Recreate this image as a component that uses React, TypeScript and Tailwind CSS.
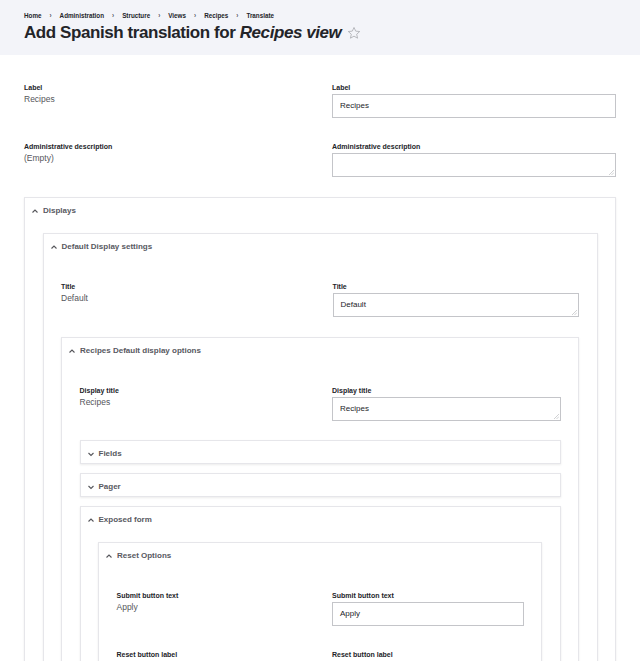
import { ReactNode } from "react";

const font = { fontFamily: '"Liberation Sans", Arial, sans-serif' };

const Chevron = ({ open }: { open: boolean }) => (
  <svg width="8" height="8" viewBox="0 0 8 8" className="shrink-0">
    <path
      d={open ? "M1.5 5.5 L4 3 L6.5 5.5" : "M1.5 3 L4 5.5 L6.5 3"}
      fill="none"
      stroke="#55565b"
      strokeWidth="1.1"
    />
  </svg>
);

const Details = ({
  title,
  open = true,
  className = "",
  children,
}: {
  title: string;
  open?: boolean;
  className?: string;
  children?: ReactNode;
}) => (
  <div
    className={`border border-[#e6e6ea] bg-white shadow-[0_1px_2px_rgba(0,0,0,0.08)] ${className}`}
  >
    <div className="flex h-[22px] items-center gap-[4px] pt-[4px] pl-[6px] text-[8px] font-bold text-[#58595f]">
      <Chevron open={open} />
      <span>{title}</span>
    </div>
    {open && <div className="px-[17.5px] pt-[13px] pb-[20px]">{children}</div>}
  </div>
);

const Row = ({
  label,
  value,
  inputValue,
  leftClass,
  resize = false,
  className = "",
}: {
  label: string;
  value: string;
  inputValue: string;
  leftClass: string;
  resize?: boolean;
  className?: string;
}) => (
  <div className={`flex ${className}`}>
    <div className={`shrink-0 ${leftClass}`}>
      <div className="text-[7px] leading-[9px] font-bold text-[#232429]">{label}</div>
      <div className="mt-[2px] text-[8.5px] leading-[10px] text-[#55565b]">{value}</div>
    </div>
    <div className="flex-1">
      <div className="text-[7px] leading-[9px] font-bold text-[#232429]">{label}</div>
      <div className="relative mt-[2px] flex h-[24px] items-center border border-[#c4c5c9] bg-white px-[7px] text-[8px] text-[#232429]">
        {inputValue}
        {resize && (
          <svg width="5" height="5" viewBox="0 0 5 5" className="absolute right-[1px] bottom-[1px]">
            <path d="M0 5 L5 0 M2.5 5 L5 2.5" stroke="#b0b1b5" strokeWidth="0.6" />
          </svg>
        )}
      </div>
    </div>
  </div>
);

export default function App() {
  const crumbs = ["Home", "Administration", "Structure", "Views", "Recipes", "Translate"];
  return (
    <div style={font} className="min-h-[661px] bg-white">
      <div className="h-[55px] bg-[#f3f4f9] px-[24px] pt-[12px]">
        <div className="flex items-center text-[6.3px] leading-[8px] font-bold text-[#232429]">
          {crumbs.map((c, i) => (
            <span key={c} className="flex items-center">
              {i > 0 && <span className="mx-[8px] text-[#545560]">›</span>}
              {c}
            </span>
          ))}
        </div>
        <h1 className="mt-[2px] flex items-center text-[17px] leading-[22px] font-bold tracking-[-0.025em] text-[#232429]">
          <span>
            Add Spanish translation for <em>Recipes view</em>
          </span>
          <svg width="14" height="14" viewBox="0 0 24 24" className="ml-[6px]">
            <path
              d="M12 2.5l2.9 6.3 6.9.7-5.2 4.6 1.5 6.8L12 17.4l-6.1 3.5 1.5-6.8-5.2-4.6 6.9-.7z"
              fill="none"
              stroke="#a5a6ac"
              strokeWidth="1.3"
              strokeLinejoin="round"
            />
          </svg>
        </h1>
      </div>

      <div className="px-[24px] pt-[28px]">
        <Row label="Label" value="Recipes" inputValue="Recipes" leftClass="w-[308px]" className="mb-[24px]" />
        <Row
          label="Administrative description"
          value="(Empty)"
          inputValue=""
          leftClass="w-[308px]"
          resize
          className="mb-[20px]"
        />

        <Details title="Displays" className="mb-[40px]">
          <Details title="Default Display settings">
            <Row
              label="Title"
              value="Default"
              inputValue="Default"
              leftClass="w-[271.5px]"
              resize
              className="mt-[13px] mb-[20px]"
            />
            <Details title="Recipes Default display options">
              <Row
                label="Display title"
                value="Recipes"
                inputValue="Recipes"
                leftClass="w-[252.5px]"
                resize
                className="mt-[13px] mb-[19px]"
              />
              <Details title="Fields" open={false} className="mb-[9px]" />
              <Details title="Pager" open={false} className="mb-[9px]" />
              <Details title="Exposed form">
                <Details title="Reset Options">
                  <Row
                    label="Submit button text"
                    value="Apply"
                    inputValue="Apply"
                    leftClass="w-[215.5px]"
                    className="mt-[13px] mb-[24px]"
                  />
                  <Row
                    label="Reset button label"
                    value="Reset"
                    inputValue="Reset"
                    leftClass="w-[215.5px]"
                  />
                </Details>
              </Details>
            </Details>
          </Details>
        </Details>
      </div>
    </div>
  );
}
